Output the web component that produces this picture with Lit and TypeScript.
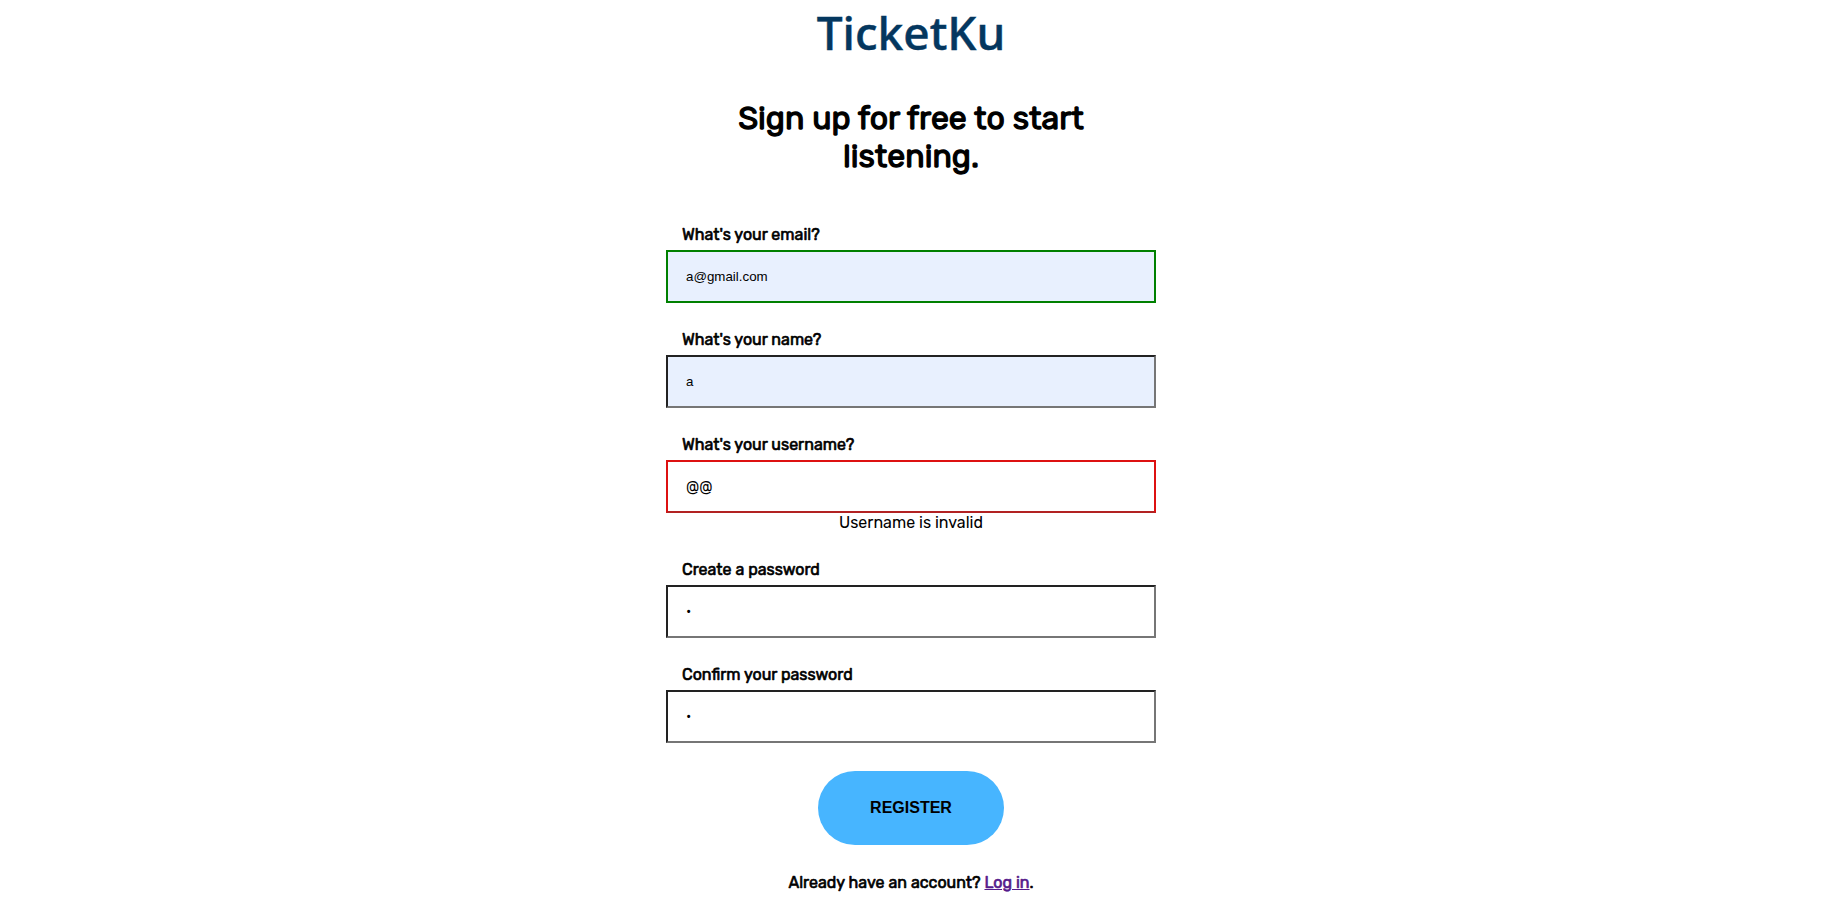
import { LitElement, html, css, nothing } from "lit";
import { customElement, state } from "lit/decorators.js";
import { classMap } from "lit/directives/class-map.js";

interface Field {
  id: string;
  label: string;
  type: string;
  value: string;
  filled?: boolean;
  valid?: boolean;
  error?: string;
}

@customElement("app-root")
export class AppRoot extends LitElement {
  @state()
  private fields: Field[] = [
    { id: "email", label: "What's your email?", type: "email", value: "a@gmail.com", filled: true, valid: true },
    { id: "name", label: "What's your name?", type: "text", value: "a", filled: true },
    { id: "username", label: "What's your username?", type: "text", value: "@@", error: "Username is invalid" },
    { id: "password", label: "Create a password", type: "password", value: "a" },
    { id: "confirm", label: "Confirm your password", type: "password", value: "a" },
  ];

  static styles = css`
    :host {
      display: block;
      padding-right: 2px;
      background: #fff;
      color: #000;
      font-family: Rubik, Roboto, "Liberation Sans", sans-serif;
      font-size: 16px;
      line-height: 20px;
    }
    .page {
      display: flex;
      flex-direction: column;
      align-items: center;
      box-sizing: border-box;
      width: 100%;
      max-width: 490px;
      margin: 0 auto;
      padding-bottom: 12px;
    }
    .logo {
      color: #04375f;
      font-family: "Noto Sans", sans-serif;
      font-size: 46px;
      font-weight: 500;
      line-height: 64px;
      -webkit-text-stroke: 0.01em;
    }
    .title,
    .label,
    .footer {
      font-weight: 400;
      -webkit-text-stroke: 0.04em;
    }
    .title {
      max-width: 400px;
      margin: 35px 0 50px;
      font-size: 32px;
      line-height: 38px;
      text-align: center;
    }
    .form {
      display: flex;
      flex-direction: column;
      align-items: center;
      width: 100%;
      gap: 27px;
    }
    .field {
      display: flex;
      flex-direction: column;
      width: 100%;
    }
    .label {
      padding-left: 16px;
      margin-bottom: 5px;
    }
    .input {
      box-sizing: border-box;
      width: 100%;
      height: 53px;
      padding: 0 18px;
      border: 2px solid;
      border-color: #222 #767676 #767676 #222;
      border-radius: 0;
      background: #fff;
      color: #000;
      font-family: inherit;
      font-size: 16px;
      outline: none;
    }
    .input[type="password"] {
      font-size: 14px;
    }
    .input.filled {
      background: #e8f0fe;
      font-family: "Liberation Sans", Arial, sans-serif;
      font-size: smaller;
    }
    .valid {
      border-color: #008000;
    }
    .invalid {
      border-color: #dd1111 #dd1111 #b22222 #dd1111;
    }
    .error {
      text-align: center;
    }
    .register {
      margin-top: 1px;
      padding: 27px 52px;
      border: 0;
      border-radius: 37px;
      background: #47b5ff;
      color: #000;
      font-family: "Liberation Sans", Arial, sans-serif;
      font-size: 16px;
      font-weight: 700;
      line-height: 20px;
    }
    .footer {
      margin: 28px 0 0;
    }
    .link {
      color: #551a8b;
    }
  `;

  private renderField(f: Field) {
    const classes = { input: true, filled: !!f.filled, valid: !!f.valid, invalid: !!f.error };
    return html`
      <div class="field">
        <label class="label" for=${f.id}>${f.label}</label>
        <input class=${classMap(classes)} id=${f.id} type=${f.type} .value=${f.value} />
        ${f.error ? html`<span class="error">${f.error}</span>` : nothing}
      </div>
    `;
  }

  render() {
    return html`
      <main class="page">
        <div class="logo">TicketKu</div>
        <h1 class="title">Sign up for free to start listening.</h1>
        <form class="form" @submit=${(e: Event) => e.preventDefault()}>
          ${this.fields.map((f) => this.renderField(f))}
          <button class="register" type="submit">REGISTER</button>
        </form>
        <p class="footer">Already have an account? <a class="link" href="#login">Log in</a>.</p>
      </main>
    `;
  }
}
